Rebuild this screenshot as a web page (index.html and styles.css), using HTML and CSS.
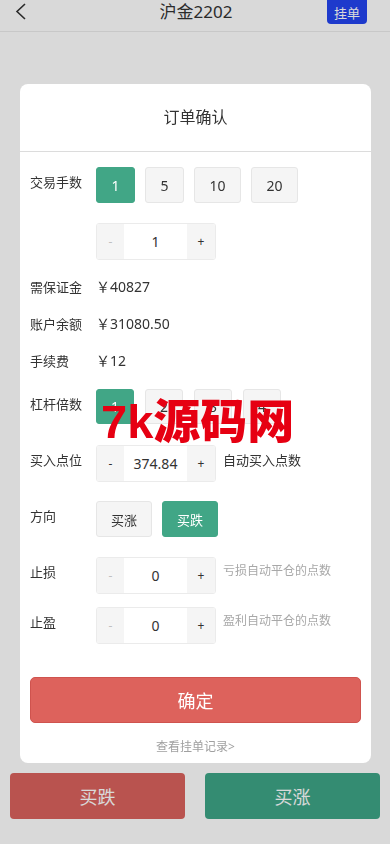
FILE: index.html
```html
<!DOCTYPE html>
<html lang="zh-CN">
<head>
  <meta charset="UTF-8" />
  <meta name="viewport" content="width=device-width, initial-scale=1.0" />
  <title>沪金2202</title>
  <link rel="stylesheet" href="styles.css">
</head>
<body>
<div class="page">
  <!-- ========= Nav ========= -->
  <header class="nav">
    <span class="nav-back">
      <svg width="12" height="18" viewBox="0 0 12 18"><polyline points="10,1 2,8.5 10,16" fill="none" stroke="#333" stroke-width="1.6"/></svg>
    </span>
    <div class="nav-title">沪金2202</div>
    <button class="nav-btn">挂单</button>
  </header>

  <div class="content"></div>

  <!-- ========= Bottom bar ========= -->
  <div class="bottom-bar">
    <button class="btn-down">买跌</button>
    <button class="btn-up">买涨</button>
  </div>
</div>

<!-- ========= Order modal ========= -->
<div class="mask">
  <div class="order-card">
    <div class="order-title">订单确认</div>
    <div class="order-body">
      <div class="row r-qty">
        <div class="label">交易手数</div>
        <div class="opts">
          <button class="opt active">1</button>
          <button class="opt">5</button>
          <button class="opt">10</button>
          <button class="opt">20</button>
        </div>
      </div>

      <div class="row r-step">
        <div class="label"></div>
        <div class="stepper">
          <span class="st-btn dim">-</span>
          <span class="st-val">1</span>
          <span class="st-btn">+</span>
        </div>
      </div>

      <div class="row info">
        <div class="label">需保证金</div>
        <div class="value">￥40827</div>
      </div>
      <div class="row info">
        <div class="label">账户余额</div>
        <div class="value">￥31080.50</div>
      </div>
      <div class="row info last">
        <div class="label">手续费</div>
        <div class="value">￥12</div>
      </div>

      <div class="row r-lev">
        <div class="label">杠杆倍数</div>
        <div class="opts lev-opts">
          <button class="opt lev active">1</button>
          <button class="opt lev">2</button>
          <button class="opt lev">3</button>
          <button class="opt lev">4</button>
        </div>
      </div>

      <div class="row r-point">
        <div class="label">买入点位</div>
        <div class="stepper">
          <span class="st-btn">-</span>
          <span class="st-val">374.84</span>
          <span class="st-btn">+</span>
        </div>
        <div class="hint dark">自动买入点数</div>
      </div>

      <div class="row r-dir">
        <div class="label">方向</div>
        <div class="opts">
          <button class="opt dir">买涨</button>
          <button class="opt dir active">买跌</button>
        </div>
      </div>

      <div class="row r-loss">
        <div class="label">止损</div>
        <div class="stepper">
          <span class="st-btn dim">-</span>
          <span class="st-val">0</span>
          <span class="st-btn">+</span>
        </div>
        <div class="hint">亏损自动平仓的点数</div>
      </div>

      <div class="row r-win">
        <div class="label">止盈</div>
        <div class="stepper">
          <span class="st-btn dim">-</span>
          <span class="st-val">0</span>
          <span class="st-btn">+</span>
        </div>
        <div class="hint">盈利自动平仓的点数</div>
      </div>

      <button class="btn-confirm">确定</button>
      <div class="order-link">查看挂单记录&gt;</div>
    </div>
    <div class="watermark">7k源码网</div>
  </div>
</div>
</body>
</html>
```

FILE: styles.css
```css
:root {
  --green: #41a686;
  --red: #dd625c;
  --gray-bg: #f5f5f5;
  --border: #e6e6e6;
  --text: #333;
  --muted: #a8a8a8;
}

/* ===== Reset ===== */
*, *::before, *::after { box-sizing: border-box; }
body {
  margin: 0;
  font-family: "Noto Sans", "Noto Sans CJK SC", sans-serif;
  background: #fff;
  color: var(--text);
}
button {
  font-family: inherit;
  cursor: pointer;
  border: none;
  padding: 0;
}

/* ===== Page ===== */
.page { min-height: 100vh; display: flex; flex-direction: column; }
.nav {
  height: 32px;
  border-bottom: 1px solid #ebebeb;
  display: flex;
  align-items: flex-start;
  justify-content: space-between;
  padding: 0 23px 0 15px;
}
.nav-back { width: 40px; padding-top: 3px; }
.nav-back svg { display: block; }
.nav-title { font-size: 17px; line-height: 24px; padding-left: 10px; }
.nav-btn {
  width: 40px; height: 24px;
  background: #2445f0; color: #fff;
  font-size: 13px; border-radius: 0 0 4px 4px;
}
.content { flex: 1; }
.bottom-bar { display: flex; gap: 20px; padding: 0 10px 25px; }
.bottom-bar button {
  flex: 1; height: 46px; border-radius: 4px;
  color: #fff; font-size: 18px;
}
.btn-down { background: #da625d; }
.btn-up { background: #3ea587; }

/* ===== Modal ===== */
.mask {
  position: fixed; inset: 0;
  background: rgba(0,0,0,.15);
  padding: 84px 19px 0 20px;
}
.order-card {
  position: relative;
  background: #fff;
  border-radius: 8px;
  overflow: hidden;
}
.order-title {
  height: 68px;
  border-bottom: 1px solid #dcdcdc;
  text-align: center;
  font-size: 16px;
  line-height: 66px;
}
.order-body { padding: 15px 10px 6px; }

.row { display: flex; align-items: flex-start; }
.label { width: 66px; flex-shrink: 0; font-size: 13px; line-height: 30px; }
.value { font-size: 14px; line-height: 30px; }
.hint { font-size: 12px; line-height: 28px; margin-left: 7px; color: var(--muted); }
.hint.dark { font-size: 13px; line-height: 30px; color: var(--text); }

.r-qty { margin-bottom: 20px; }
.r-step { margin-bottom: 12px; }
.info { margin-bottom: 7px; }
.info.last { margin-bottom: 13px; }
.r-lev { margin-bottom: 21px; }
.r-point { margin-bottom: 19px; }
.r-dir { margin-bottom: 20px; }
.r-loss { margin-bottom: 13px; }
.r-win { margin-bottom: 33px; }

.opts { display: flex; gap: 10px; }
.lev-opts { gap: 11px; }
.opt {
  height: 36px;
  padding: 0 14.5px;
  border: 1px solid var(--border);
  border-radius: 3px;
  background: var(--gray-bg);
  color: var(--text);
  font-size: 14px;
}
.opt.active { background: var(--green); border-color: var(--green); color: #fff; }
.opt.lev { height: 35px; padding: 0 14px; }
.opt.dir { font-size: 13px; padding: 0 14px; }

.stepper {
  display: flex;
  height: 37px;
  border: 1px solid #ebebeb;
  border-radius: 3px;
  overflow: hidden;
}
.st-btn {
  width: 27px;
  background: var(--gray-bg);
  text-align: center;
  font-size: 12px;
  line-height: 35px;
  color: var(--text);
}
.st-btn:last-child { width: 28px; }
.st-btn.dim { color: #c0c0c0; }
.st-val {
  width: 63px;
  background: #fff;
  text-align: center;
  font-size: 14px;
  line-height: 35px;
}

.btn-confirm {
  display: block; width: 100%;
  height: 46px;
  background: var(--red);
  border: 1px solid #cf534e;
  border-radius: 5px;
  color: #fff;
  font-size: 18px;
}
.order-link {
  margin-top: 14px;
  text-align: center;
  font-size: 12px;
  line-height: 20px;
  color: #a0a0a0;
}

/* watermark stamped over the picture */
.watermark {
  position: absolute;
  left: 81px; top: 315px;
  font-family: "Liberation Sans", "Noto Sans CJK SC", sans-serif;
  font-weight: 900;
  font-size: 47px;
  line-height: 46px;
  color: #e60012;
  white-space: nowrap;
}
```
